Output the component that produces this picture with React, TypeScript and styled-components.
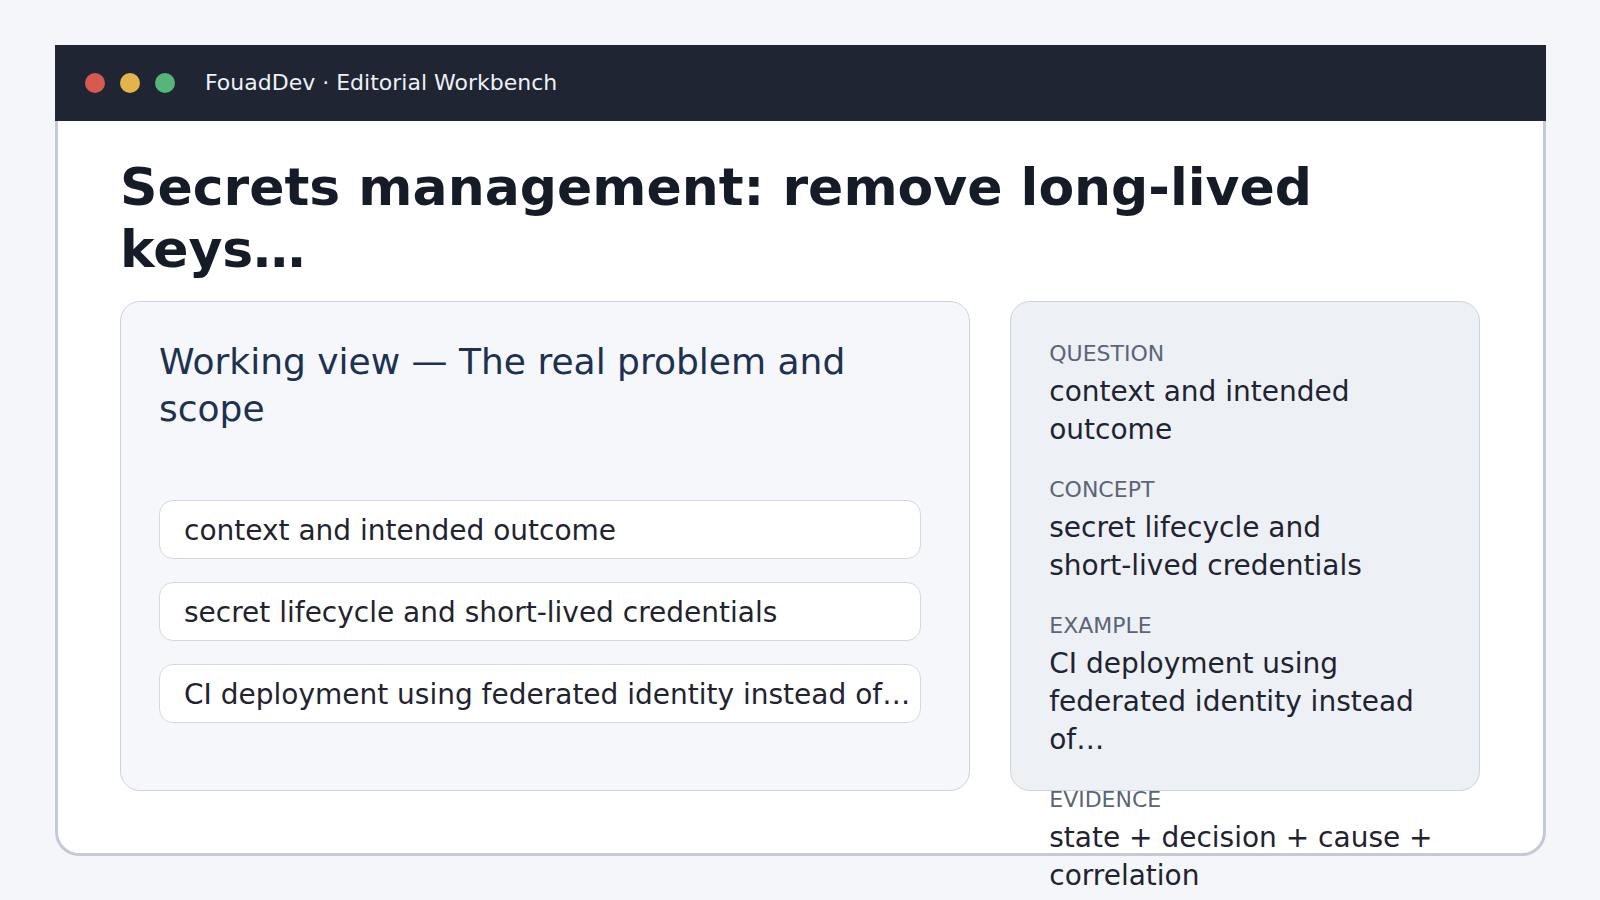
import styled, { createGlobalStyle } from "styled-components";

const GlobalStyle = createGlobalStyle`
  html, body {
    margin: 0;
    padding: 0;
    background: #f5f6fa;
  }
  body {
    font-family: "DejaVu Sans", "Noto Sans", sans-serif;
  }
  * {
    box-sizing: border-box;
  }
`;

const items = [
  "context and intended outcome",
  "secret lifecycle and short-lived credentials",
  "CI deployment using federated identity instead of…",
];

// U+2011 keeps "short‑lived" on one line, as in the side panel
const facts = [
  { label: "QUESTION", value: "context and intended outcome" },
  { label: "CONCEPT", value: "secret lifecycle and short\u2011lived credentials" },
  {
    label: "EXAMPLE",
    value: "CI deployment using federated identity instead of…",
  },
  { label: "EVIDENCE", value: "state + decision + cause + correlation" },
];

export default function App() {
  return (
    <>
      <GlobalStyle />
      <Page>
        <Window>
          <TitleBar>
            <Dot $color="#d55b50" />
            <Dot $color="#e2b44b" />
            <Dot $color="#58b57a" />
            <WindowTitle>FouadDev · Editorial Workbench</WindowTitle>
          </TitleBar>
          <WindowBody>
            <Heading>Secrets management: remove long-lived keys…</Heading>
            <Columns>
              <WorkCard>
                <WorkTitle>Working view — The real problem and scope</WorkTitle>
                <ItemList>
                  {items.map((item) => (
                    <Item key={item}>{item}</Item>
                  ))}
                </ItemList>
              </WorkCard>
              <SideCard>
                {facts.map((f) => (
                  <Fact key={f.label}>
                    <FactLabel>{f.label}</FactLabel>
                    <FactValue>{f.value}</FactValue>
                  </Fact>
                ))}
              </SideCard>
            </Columns>
          </WindowBody>
        </Window>
      </Page>
    </>
  );
}

const Page = styled.div`
  min-height: 100vh;
  padding: 45px 54px 0 55px;
`;

const Window = styled.div`
  height: 811px;
  display: flex;
  flex-direction: column;
`;

const TitleBar = styled.div`
  height: 76px;
  flex-shrink: 0;
  background: #1f2532;
  display: flex;
  align-items: center;
  gap: 15px;
  padding: 0 30px;
`;

const Dot = styled.span<{ $color: string }>`
  width: 20px;
  height: 20px;
  border-radius: 50%;
  background: ${(p) => p.$color};
  flex-shrink: 0;
`;

const WindowTitle = styled.span`
  margin-left: 15px;
  color: #eef1f5;
  font-size: 22px;
  line-height: 1;
`;

const WindowBody = styled.div`
  flex: 1;
  min-height: 0;
  display: flex;
  flex-direction: column;
  background: #ffffff;
  border: 3px solid #c3cad6;
  border-top: none;
  border-radius: 0 0 24px 24px;
  padding: 35px 63px 62px 62px;
`;

const Heading = styled.h1`
  margin: 0 0 20px;
  font-size: 52px;
  line-height: 1.2;
  font-weight: 700;
  color: #161c27;
`;

const Columns = styled.div`
  flex: 1;
  min-height: 0;
  display: grid;
  grid-template-columns: minmax(0, 1.81fr) minmax(0, 1fr);
  grid-template-rows: minmax(0, 1fr);
  gap: 40px;
`;

const WorkCard = styled.section`
  background: #f6f7fb;
  border: 1.5px solid #cdd3de;
  border-radius: 20px;
  padding: 37px 38px 38px;
`;

const WorkTitle = styled.h2`
  margin: 0 0 68px;
  font-size: 36px;
  line-height: 1.3;
  font-weight: 400;
  color: #1d3150;
`;

const ItemList = styled.div`
  display: flex;
  flex-direction: column;
  gap: 23px;
  margin-right: 10px;
`;

const Item = styled.div`
  background: #ffffff;
  border: 1px solid #d3d8e2;
  border-radius: 14px;
  padding: 11px 20px 8px 24px;
  font-size: 28px;
  line-height: 1.35;
  color: #1f2430;
  white-space: nowrap;
`;

const SideCard = styled.aside`
  background: #edf0f5;
  border: 1.5px solid #cdd3de;
  border-radius: 20px;
  padding: 39px 38px 38px;
`;

const Fact = styled.div`
  & + & {
    margin-top: 28px;
  }
`;

const FactLabel = styled.div`
  font-size: 22px;
  line-height: 1.2;
  color: #5c6575;
  margin-bottom: 6px;
`;

const FactValue = styled.div`
  font-size: 28px;
  line-height: 1.35;
  color: #1f2430;
`;
